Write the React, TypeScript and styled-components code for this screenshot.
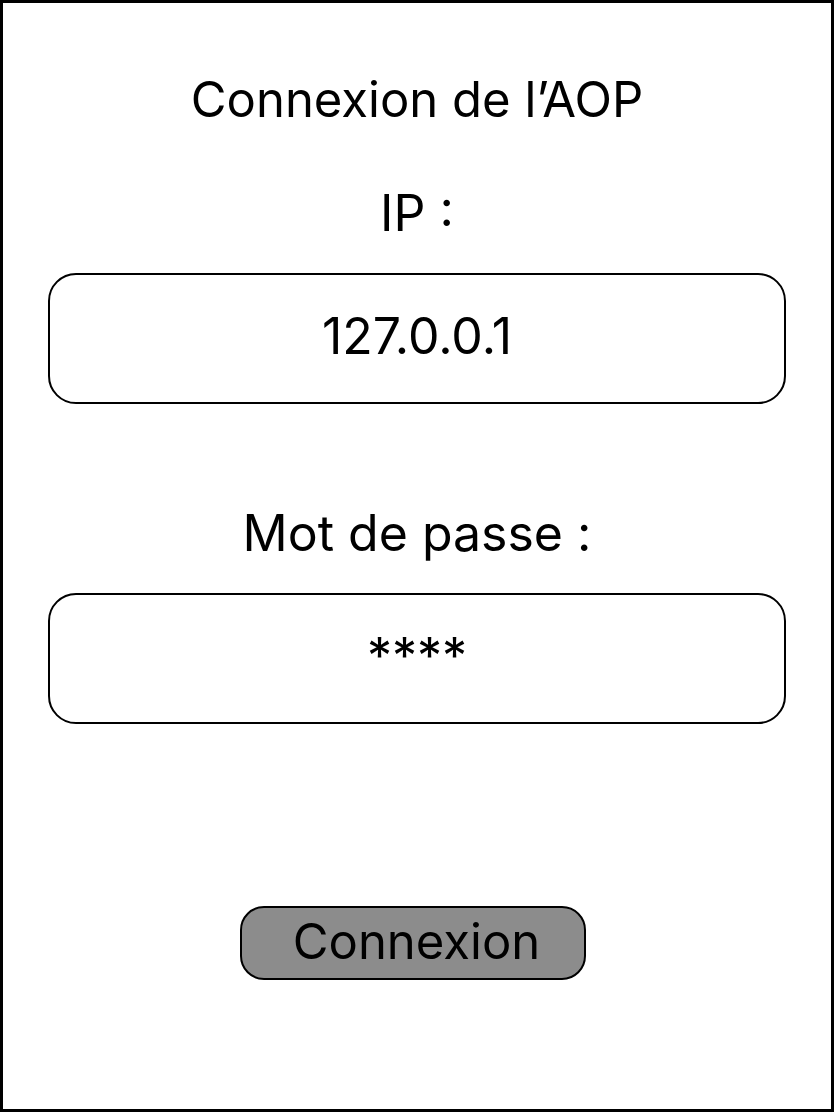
import React from "react";
import styled, { createGlobalStyle } from "styled-components";

const Global = createGlobalStyle`
  html, body { margin: 0; padding: 0; background: #fff; }
  body { font-family: Inter, "Noto Sans", sans-serif; color: #000; }
`;

const Frame = styled.div`
  box-sizing: border-box;
  width: 834px;
  height: 1112px;
  border: 3px solid #000;
  background: #fff;
  display: flex;
  flex-direction: column;
  align-items: center;
  padding-top: 69px;
`;

const Title = styled.h1`
  margin: 0;
  font-weight: 400;
  font-size: 49px;
  line-height: 56px;
`;

const Label = styled.div<{ $top: number }>`
  margin-top: ${(p) => p.$top}px;
  font-size: 50px;
  line-height: 56px;
`;

const Field = styled.div<{ $top: number }>`
  box-sizing: border-box;
  margin-top: ${(p) => p.$top}px;
  width: 738px;
  height: 131px;
  border: 2px solid #000;
  border-radius: 28px;
  display: flex;
  align-items: center;
  justify-content: center;
  padding-bottom: 5px;
  font-size: 50px;
  line-height: 56px;
`;

const Button = styled.button`
  box-sizing: border-box;
  margin: 182px 9px 0 0;
  width: 346px;
  height: 74px;
  border: 2px solid #000;
  border-radius: 24px;
  background: #8c8c8c;
  font-family: Inter, "Noto Sans", sans-serif;
  font-size: 49px;
  line-height: 56px;
  color: #000;
  padding: 0 0 3px 8px;
  display: flex;
  align-items: center;
  justify-content: center;
`;

export default function App() {
  return (
    <>
      <Global />
      <Frame>
        <Title>Connexion de l’AOP</Title>
        <Label $top={57}>IP :</Label>
        <Field $top={32}>127.0.0.1</Field>
        <Label $top={101}>Mot de passe :</Label>
        <Field $top={32}>****</Field>
        <Button>Connexion</Button>
      </Frame>
    </>
  );
}
